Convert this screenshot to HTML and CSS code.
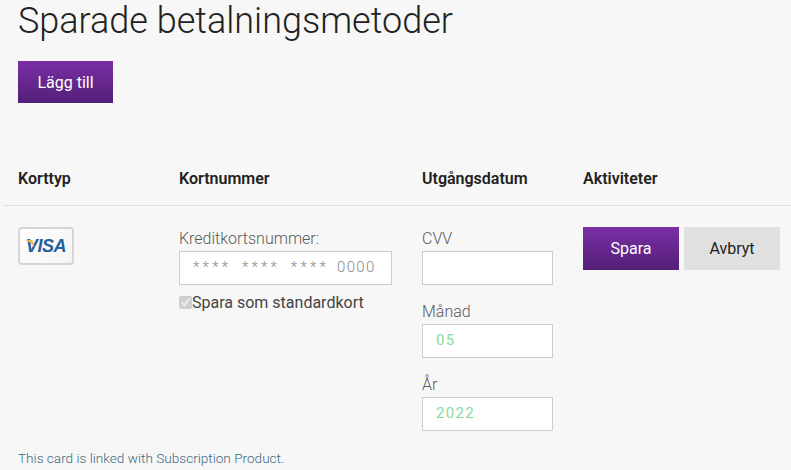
FILE: index.html
```html
<!doctype html>
<html lang="sv">
  <head>
    <meta charset="UTF-8" />
    <meta name="viewport" content="width=device-width, initial-scale=1.0" />
    <title>Sparade betalningsmetoder</title>
    <link rel="stylesheet" href="styles.css">
  </head>
  <body>
    <div class="container">
      <h1>Sparade betalningsmetoder</h1>
      <button class="btn btn-primary btn-add">Lägg till</button>

      <div class="cards">
        <div class="row row-head">
          <div>Korttyp</div>
          <div>Kortnummer</div>
          <div>Utgångsdatum</div>
          <div>Aktiviteter</div>
        </div>

        <div class="row row-body">
          <div>
            <div class="card-logo">
              <svg class="visa-tick" width="10" height="8" viewBox="0 0 10 8">
                <path d="M0 0H7.500L9.500 7.500C7.500 4 4 1.500 0 0Z" fill="#f0b94f" />
              </svg>
              <span class="visa-text">VISA</span>
            </div>
          </div>

          <div class="number-fields">
            <div class="field-label">Kreditkortsnummer:</div>
            <div class="field card-number">
              <span class="card-stars">**** **** ****</span>
              <span class="card-digits">0000</span>
            </div>
            <label class="default-card">
              <input type="checkbox" checked disabled />Spara som standardkort
            </label>
          </div>

          <div class="date-fields">
            <div>
              <label class="field-label" for="cvv">CVV</label>
              <input class="field" type="text" id="cvv" />
            </div>
            <div>
              <label class="field-label" for="month">Månad</label>
              <input class="field filled" type="text" id="month" value="05" />
            </div>
            <div>
              <label class="field-label" for="year">År</label>
              <input class="field filled" type="text" id="year" value="2022" />
            </div>
          </div>

          <div class="actions">
            <button class="btn btn-primary btn-save">Spara</button>
            <button class="btn btn-cancel">Avbryt</button>
          </div>
        </div>
      </div>

      <p class="note">This card is linked with Subscription Product.</p>
    </div>
  </body>
</html>
```

FILE: styles.css
```css
:root {
  --purple-top: #7a2fa5;
  --purple-bottom: #541f78;
  --background-color: #f7f7f7;
  --border-color: #cccccc;
  --text-color: #222222;
  --label-color: #5a5a5a;
}

html,
body {
  height: 100%;
}

body {
  font-family: Roboto, "Liberation Sans", sans-serif;
  margin: 0;
  padding: 0;
  background-color: var(--background-color);
  color: var(--text-color);
  overflow: hidden;
}

.container {
  padding-left: 3px;
}

h1 {
  font-size: 36px;
  font-weight: 300;
  line-height: 42px;
  margin: 0 0 19px 15px;
  color: #222222;
}

.btn {
  border: none;
  font-family: inherit;
  font-size: 16px;
  cursor: pointer;
  padding: 0;
}

.btn-primary {
  background: linear-gradient(to bottom, var(--purple-top), var(--purple-bottom));
  color: #ffffff;
}

.btn-add {
  display: block;
  width: 95px;
  height: 42px;
  margin-left: 15px;
}

.cards {
  margin-top: 52px;
}

.row {
  display: grid;
  grid-template-columns: 161px 243px 161px 1fr;
  padding-left: 15px;
}

.row-head {
  height: 51px;
  align-items: start;
  font-size: 16px;
  font-weight: 600;
  line-height: 19px;
  padding-top: 14px;
  box-sizing: border-box;
  border-bottom: 1px solid #dddddd;
}

.row-body {
  padding-top: 21px;
}

.card-logo {
  position: relative;
  width: 56px;
  height: 38px;
  box-sizing: border-box;
  border: 2px solid #d6d6d6;
  border-radius: 4px;
  background: linear-gradient(135deg, #ffffff, #f4f4f4);
  display: flex;
  align-items: center;
  justify-content: center;
}

.visa-text {
  font-family: "Liberation Sans", sans-serif;
  font-size: 18px;
  font-weight: 700;
  font-style: italic;
  color: #24609b;
  letter-spacing: -0.4px;
  margin-top: 1px;
}

.visa-tick {
  position: absolute;
  left: 5px;
  top: 11px;
}

.number-fields,
.date-fields {
  padding-top: 2px;
}

.field-label {
  display: block;
  font-size: 16px;
  font-weight: 300;
  line-height: 19px;
  color: var(--label-color);
}

.field {
  display: block;
  width: 131px;
  height: 34px;
  box-sizing: border-box;
  margin-top: 3px;
  padding: 0 13px 2px;
  border: 1px solid var(--border-color);
  border-radius: 0;
  background-color: #ffffff;
  font-family: inherit;
  font-size: 15px;
  font-weight: 300;
  letter-spacing: 1.300px;
  outline: none;
}

.card-number {
  display: flex;
  align-items: center;
  width: 213px;
  color: #8a8a8a;
}

.card-stars {
  letter-spacing: 3.200px;
  word-spacing: 3.800px;
  margin-right: 8px;
}

.filled {
  color: #86dba0;
  font-weight: 400;
}

.default-card {
  display: flex;
  align-items: center;
  margin-top: 8px;
  font-size: 16px;
  font-weight: 400;
  line-height: 19px;
  color: #444444;
}

.default-card input {
  width: 13px;
  height: 13px;
  margin: 0;
}

.date-fields {
  display: flex;
  flex-direction: column;
  gap: 17px;
}

.actions {
  display: flex;
  gap: 5px;
}

.btn-save,
.btn-cancel {
  width: 96px;
  height: 43px;
}

.btn-cancel {
  background-color: #e0e0e0;
  color: #222222;
}

.note {
  margin: 19px 0 0 15px;
  font-size: 13.600px;
  font-weight: 300;
  line-height: 17px;
  color: #3c6880;
}
```
